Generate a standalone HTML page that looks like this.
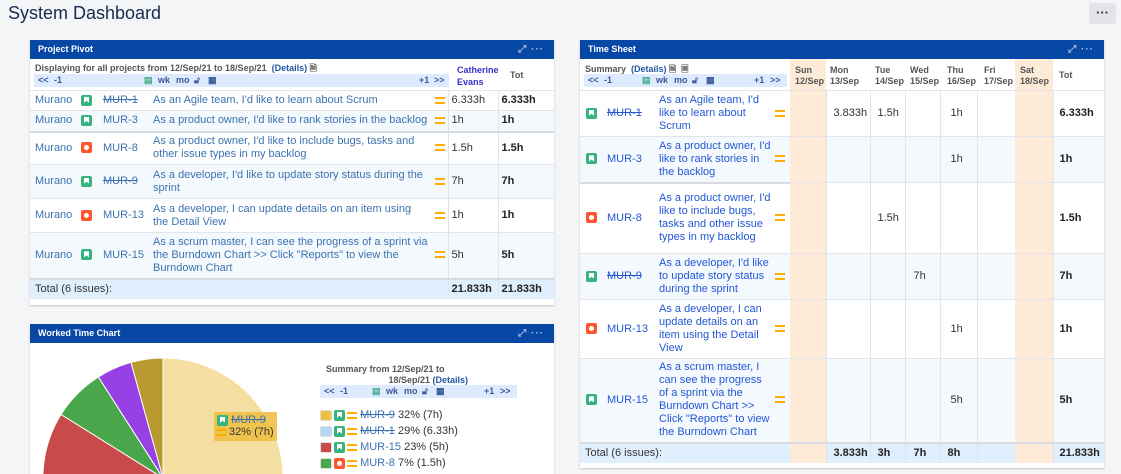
<!DOCTYPE html>
<html><head><meta charset="utf-8"><style>
*{box-sizing:border-box;margin:0;padding:0}
html{width:1121px;height:474px;overflow:hidden}
body{width:1121px;height:474px;overflow:hidden;background:#f4f5f7;font-family:"Liberation Sans",Arial,sans-serif;font-size:11px;color:#333;position:relative}
.abs{position:absolute}
.title{left:8px;top:2px;font-size:18px;color:#172b4d;line-height:22px}
.more{left:1089px;top:3px;width:27px;height:21px;background:#e2e4e9;border-radius:3px;text-align:center;font-size:13px;line-height:20px;color:#333;font-weight:bold}
.panel{background:#fff;box-shadow:0 1px 2px rgba(0,0,0,.2)}
.hdr{height:19px;background:#0747a6;color:#fff;font-weight:bold;font-size:9px;line-height:19px;padding-left:8px;position:relative}
.hdr .ic{position:absolute;right:10px;top:0;font-size:10px;color:#a8c0e8;letter-spacing:1px}
table{border-collapse:collapse;table-layout:fixed;position:absolute}
td{vertical-align:middle;border-top:1px solid #e1e4e8;padding:0 3px;line-height:13px}
.lk{color:#3b73af}
.rk{color:#2357d4}
.st{text-decoration:line-through}
.b{font-weight:bold;color:#222}
.alt td{background:#f4f9fe}
.tot td{background:#e0effd;border-top:2px solid #d8dbe0}
.vl{border-left:1px solid #e1e4e8}
.pe{background:#fdebd8!important}
.sq{display:inline-block;width:11px;height:11px;border-radius:2px;vertical-align:middle;position:relative}
.g{background:#36b37e}.r{background:#ff5630}
.g:after{content:"";position:absolute;left:3px;top:2px;width:5px;height:6px;background:#fff;clip-path:polygon(0 0,100% 0,100% 100%,50% 70%,0 100%)}
.r:after{content:"";position:absolute;left:3px;top:3px;width:5px;height:5px;border-radius:50%;background:#fff}
.eq{display:inline-block;width:10px;height:7px;border-top:2px solid #ffab00;border-bottom:2px solid #ffab00;vertical-align:middle}
.nav{background:#deebff;height:13px;font-size:9px;font-weight:bold;color:#3b5998;line-height:13px}
.nav span{position:absolute;top:0}
.sm{font-size:9px;font-weight:bold;color:#555}
.ts td.s{padding:0 0 0 3px}
</style></head><body>
<div class="abs title">System Dashboard</div>
<div class="abs more">···</div>

<!-- Project Pivot -->
<div class="abs panel" style="left:30px;top:40px;width:524px;height:265px">
<div class="hdr">Project Pivot<span class="ic">⤢ ···</span></div>
<div class="abs sm" style="left:5px;top:21px">Displaying for all projects from 12/Sep/21 to 18/Sep/21 &nbsp;<span style="color:#2357a6">(Details)</span> 🗎</div>
<div class="abs nav" style="left:4px;top:34px;width:415px"><span style="left:4px">&lt;&lt;</span><span style="left:20px">-1</span><span style="left:110px;color:#4a8">▤</span><span style="left:124px">wk</span><span style="left:142px">mo</span><span style="left:160px">🔓︎</span><span style="left:174px">▦</span><span style="left:385px">+1</span><span style="left:400px">&gt;&gt;</span></div>
<div class="abs" style="left:427px;top:24px;font-size:9px;font-weight:bold;color:#3333cc;line-height:12px">Catherine<br>Evans</div>
<div class="abs sm" style="left:480px;top:30px">Tot</div>
<table style="left:0;top:50px;width:524px">
<colgroup><col style="width:48px"><col style="width:22px"><col style="width:50px"><col style="width:282px"><col style="width:16px"><col style="width:50px"><col style="width:56px"></colgroup>
<tr style="height:20px"><td class="lk" style="padding-left:5px">Murano</td><td><span class="sq g"></span></td><td class="lk st">MUR-1</td><td class="lk">As an Agile team, I'd like to learn about Scrum</td><td><span class="eq"></span></td><td class="vl">6.333h</td><td class="vl b">6.333h</td></tr>
<tr class="alt" style="height:21px"><td class="lk" style="padding-left:5px">Murano</td><td><span class="sq g"></span></td><td class="lk">MUR-3</td><td class="lk">As a product owner, I'd like to rank stories in the backlog</td><td><span class="eq"></span></td><td class="vl">1h</td><td class="vl b">1h</td></tr>
<tr style="height:33px"><td class="lk" style="padding-left:5px;border-top:2px solid #d8dbe0">Murano</td><td style="border-top:2px solid #d8dbe0"><span class="sq r"></span></td><td class="lk" style="border-top:2px solid #d8dbe0">MUR-8</td><td class="lk" style="border-top:2px solid #d8dbe0">As a product owner, I'd like to include bugs, tasks and other issue types in my backlog</td><td style="border-top:2px solid #d8dbe0"><span class="eq"></span></td><td class="vl" style="border-top:2px solid #d8dbe0">1.5h</td><td class="vl b" style="border-top:2px solid #d8dbe0">1.5h</td></tr>
<tr class="alt" style="height:34px"><td class="lk" style="padding-left:5px">Murano</td><td><span class="sq g"></span></td><td class="lk st">MUR-9</td><td class="lk">As a developer, I'd like to update story status during the sprint</td><td><span class="eq"></span></td><td class="vl">7h</td><td class="vl b">7h</td></tr>
<tr style="height:34px"><td class="lk" style="padding-left:5px">Murano</td><td><span class="sq r"></span></td><td class="lk">MUR-13</td><td class="lk">As a developer, I can update details on an item using the Detail View</td><td><span class="eq"></span></td><td class="vl">1h</td><td class="vl b">1h</td></tr>
<tr class="alt" style="height:46px"><td class="lk" style="padding-left:5px">Murano</td><td><span class="sq g"></span></td><td class="lk">MUR-15</td><td class="lk">As a scrum master, I can see the progress of a sprint via the Burndown Chart &gt;&gt; Click "Reports" to view the Burndown Chart</td><td><span class="eq"></span></td><td class="vl">5h</td><td class="vl b">5h</td></tr>
<tr class="tot" style="height:20px"><td colspan="5" style="padding-left:5px">Total (6 issues):</td><td class="vl b">21.833h</td><td class="vl b">21.833h</td></tr>
</table>
</div>

<!-- Worked Time Chart -->
<div class="abs panel" style="left:30px;top:324px;width:524px;height:150px;overflow:hidden">
<div class="hdr">Worked Time Chart<span class="ic">⤢ ···</span></div>
<svg class="abs" style="left:0;top:0" width="524" height="150">
<g transform="translate(133,154)" stroke="#fff" stroke-width="1">
<path d="M0,0 L0,-120 A120,120 0 0,1 108.9,50.5 Z" fill="#f5dfa0"/>
<path d="M0,0 L108.9,50.5 A120,120 0 0,1 -64,101.5 Z" fill="#b3d7f5"/>
<path d="M0,0 L-64,101.5 A120,120 0 0,1 -102,-63.5 Z" fill="#c94a4a"/>
<path d="M0,0 L-102,-63.5 A120,120 0 0,1 -64.6,-101 Z" fill="#4aa64a"/>
<path d="M0,0 L-64.6,-101 A120,120 0 0,1 -32,-115.6 Z" fill="#9640e6"/>
<path d="M0,0 L-32,-115.6 A120,120 0 0,1 0,-120 Z" fill="#b89a30"/>
</g></svg>
<div class="abs" style="left:184px;top:88px;width:63px;height:29px;background:rgba(240,192,70,.9);padding:2px 3px;line-height:12px;font-size:11px"><span class="sq g"></span> <span class="lk st">MUR-9</span><br><span class="eq" style="width:9px"></span> 32% (7h)</div>
<div class="abs sm" style="left:296px;top:40px;line-height:11px">Summary from 12/Sep/21 to<br>&nbsp;&nbsp;&nbsp;&nbsp;&nbsp;&nbsp;&nbsp;&nbsp;&nbsp;&nbsp;&nbsp;&nbsp;&nbsp;&nbsp;&nbsp;&nbsp;&nbsp;&nbsp;&nbsp;&nbsp;&nbsp;&nbsp;&nbsp;&nbsp;&nbsp;18/Sep/21 <span style="color:#2357a6">(Details)</span></div>
<div class="abs nav" style="left:290px;top:61px;width:197px"><span style="left:4px">&lt;&lt;</span><span style="left:20px">-1</span><span style="left:52px;color:#4a8">▤</span><span style="left:66px">wk</span><span style="left:84px">mo</span><span style="left:102px">🔓︎</span><span style="left:116px">▦</span><span style="left:164px">+1</span><span style="left:180px">&gt;&gt;</span></div>
<div class="abs" style="left:290px;top:83px;line-height:16px;font-size:11px;white-space:nowrap">
<div><span class="sq" style="background:#f0c040;width:12px;border:1px solid #ddd"></span><span class="sq g" style="margin-left:2px"></span><span class="eq" style="margin-left:2px"></span> <span class="lk st">MUR-9</span> 32% (7h)</div>
<div><span class="sq" style="background:#b3d7f5;width:12px;border:1px solid #ddd"></span><span class="sq g" style="margin-left:2px"></span><span class="eq" style="margin-left:2px"></span> <span class="lk st">MUR-1</span> 29% (6.33h)</div>
<div><span class="sq" style="background:#c94a4a;width:12px;border:1px solid #ddd"></span><span class="sq g" style="margin-left:2px"></span><span class="eq" style="margin-left:2px"></span> <span class="lk">MUR-15</span> 23% (5h)</div>
<div><span class="sq" style="background:#4aa64a;width:12px;border:1px solid #ddd"></span><span class="sq r" style="margin-left:2px"></span><span class="eq" style="margin-left:2px"></span> <span class="lk">MUR-8</span> 7% (1.5h)</div>
</div>
</div>

<!-- Time Sheet -->
<div class="abs panel" style="left:580px;top:40px;width:524px;height:428px">
<div class="hdr">Time Sheet<span class="ic">⤢ ···</span></div>
<div class="abs sm" style="left:5px;top:22px">Summary &nbsp;<span style="color:#2357a6">(Details)</span> 🗎 &nbsp;🗏</div>
<div class="abs nav" style="left:4px;top:34px;width:203px"><span style="left:4px">&lt;&lt;</span><span style="left:20px">-1</span><span style="left:58px;color:#4a8">▤</span><span style="left:72px">wk</span><span style="left:90px">mo</span><span style="left:108px">🔓︎</span><span style="left:122px">▦</span><span style="left:170px">+1</span><span style="left:186px">&gt;&gt;</span></div>
<div class="abs" style="left:210px;top:19px;width:36px;height:31px;background:#fdebd8"></div>
<div class="abs" style="left:435px;top:19px;width:38px;height:31px;background:#fdebd8"></div>
<div class="abs sm" style="left:215px;top:25px;line-height:11px">Sun<br>12/Sep</div>
<div class="abs sm" style="left:250px;top:25px;line-height:11px">Mon<br>13/Sep</div>
<div class="abs sm" style="left:295px;top:25px;line-height:11px">Tue<br>14/Sep</div>
<div class="abs sm" style="left:330px;top:25px;line-height:11px">Wed<br>15/Sep</div>
<div class="abs sm" style="left:367px;top:25px;line-height:11px">Thu<br>16/Sep</div>
<div class="abs sm" style="left:404px;top:25px;line-height:11px">Fri<br>17/Sep</div>
<div class="abs sm" style="left:440px;top:25px;line-height:11px">Sat<br>18/Sep</div>
<div class="abs sm" style="left:479px;top:30px">Tot</div>
<table class="ts" style="left:0;top:50px;width:524px">
<colgroup><col style="width:24px"><col style="width:52px"><col style="width:116px"><col style="width:18px"><col style="width:36px"><col style="width:44px"><col style="width:35px"><col style="width:35px"><col style="width:37px"><col style="width:38px"><col style="width:38px"><col style="width:51px"></colgroup>
<tr style="height:46px"><td style="padding-left:6px"><span class="sq g"></span></td><td class="rk st">MUR-1</td><td class="rk s">As an Agile team, I'd like to learn about Scrum</td><td><span class="eq"></span></td><td class="pe"></td><td class="vl" style="padding-left:7px">3.833h</td><td class="vl" style="padding-left:7px">1.5h</td><td class="vl"></td><td class="vl" style="padding-left:10px">1h</td><td class="vl"></td><td class="pe"></td><td class="vl b" style="padding-left:6px">6.333h</td></tr>
<tr class="alt" style="height:46px"><td style="padding-left:6px"><span class="sq g"></span></td><td class="rk">MUR-3</td><td class="rk s">As a product owner, I'd like to rank stories in the backlog</td><td><span class="eq"></span></td><td class="pe"></td><td class="vl"></td><td class="vl"></td><td class="vl"></td><td class="vl" style="padding-left:10px">1h</td><td class="vl"></td><td class="pe"></td><td class="vl b" style="padding-left:6px">1h</td></tr>
<tr style="height:71px"><td style="padding-left:6px;border-top:2px solid #d8dbe0"><span class="sq r"></span></td><td class="rk" style="border-top:2px solid #d8dbe0">MUR-8</td><td class="rk s" style="border-top:2px solid #d8dbe0">As a product owner, I'd like to include bugs, tasks and other issue types in my backlog</td><td style="border-top:2px solid #d8dbe0"><span class="eq"></span></td><td class="pe"></td><td class="vl"></td><td class="vl" style="padding-left:7px">1.5h</td><td class="vl"></td><td class="vl"></td><td class="vl"></td><td class="pe"></td><td class="vl b" style="padding-left:6px">1.5h</td></tr>
<tr class="alt" style="height:46px"><td style="padding-left:6px"><span class="sq g"></span></td><td class="rk st">MUR-9</td><td class="rk s">As a developer, I'd like to update story status during the sprint</td><td><span class="eq"></span></td><td class="pe"></td><td class="vl"></td><td class="vl"></td><td class="vl" style="padding-left:8px">7h</td><td class="vl"></td><td class="vl"></td><td class="pe"></td><td class="vl b" style="padding-left:6px">7h</td></tr>
<tr style="height:59px"><td style="padding-left:6px"><span class="sq r"></span></td><td class="rk">MUR-13</td><td class="rk s">As a developer, I can update details on an item using the Detail View</td><td><span class="eq"></span></td><td class="pe"></td><td class="vl"></td><td class="vl"></td><td class="vl"></td><td class="vl" style="padding-left:10px">1h</td><td class="vl"></td><td class="pe"></td><td class="vl b" style="padding-left:6px">1h</td></tr>
<tr class="alt" style="height:84px"><td style="padding-left:6px"><span class="sq g"></span></td><td class="rk">MUR-15</td><td class="rk s">As a scrum master, I can see the progress of a sprint via the Burndown Chart &gt;&gt; Click "Reports" to view the Burndown Chart</td><td><span class="eq"></span></td><td class="pe"></td><td class="vl"></td><td class="vl"></td><td class="vl"></td><td class="vl" style="padding-left:10px">5h</td><td class="vl"></td><td class="pe"></td><td class="vl b" style="padding-left:6px">5h</td></tr>
<tr class="tot" style="height:20px"><td colspan="4" style="padding-left:5px">Total (6 issues):</td><td class="pe"></td><td class="vl b" style="padding-left:7px">3.833h</td><td class="vl b" style="padding-left:7px">3h</td><td class="vl b" style="padding-left:8px">7h</td><td class="vl b" style="padding-left:7px">8h</td><td class="vl"></td><td class="pe"></td><td class="vl b" style="padding-left:6px">21.833h</td></tr>
</table>
</div>
</body></html>
